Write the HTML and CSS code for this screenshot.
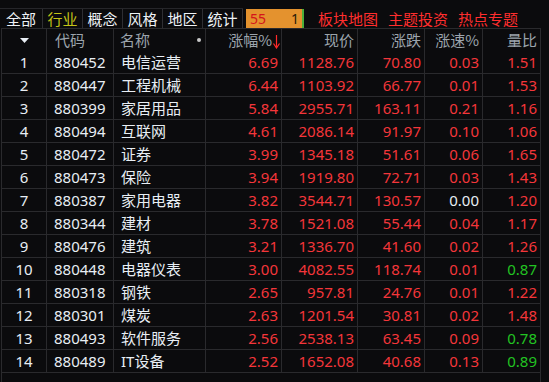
FILE: index.html
```html
<!DOCTYPE html>
<html lang="zh">
<head>
<meta charset="utf-8">
<link rel="stylesheet" href="styles.css">
</head>
<body>
<div class="topbar">
  <div class="tabs">
    <span class="tab first">全部</span>
    <span class="tab active">行业</span>
    <span class="tab">概念</span>
    <span class="tab">风格</span>
    <span class="tab">地区</span>
    <span class="tab">统计</span>
  </div>
  <div class="inputbox"><span class="in-left">55</span><span class="in-right">1</span></div>
  <div class="links">
    <span class="link">板块地图</span>
    <span class="link">主题投资</span>
    <span class="link">热点专题</span>
  </div>
</div>
<div class="table">
  <div class="row head">
    <div class="c center"><svg class="tri" width="9" height="5" viewBox="0 0 9 5"><polygon points="0,0 9,0 4.5,5" fill="#e8eef4"/></svg></div>
    <div class="c left">代码</div>
    <div class="c left name-h">名称<span class="dot"></span></div>
    <div class="c right sort">涨幅%<svg class="arrow" width="7" height="14" viewBox="0 0 7 14"><line x1="3.5" y1="0" x2="3.5" y2="12" stroke="#ff2a2a" stroke-width="1.2"/><polyline points="0.5,8.5 3.5,13 6.5,8.5" fill="none" stroke="#ff2a2a" stroke-width="1.2"/></svg></div>
    <div class="c right">现价</div>
    <div class="c right">涨跌</div>
    <div class="c right">涨速%</div>
    <div class="c right">量比</div>
  </div>
  <div class="row"><div class="c center w">1</div><div class="c left w">880452</div><div class="c left w">电信运营</div><div class="c right r">6.69</div><div class="c right r">1128.76</div><div class="c right r">70.80</div><div class="c right r">0.03</div><div class="c right r">1.51</div></div>
  <div class="row"><div class="c center w">2</div><div class="c left w">880447</div><div class="c left w">工程机械</div><div class="c right r">6.44</div><div class="c right r">1103.92</div><div class="c right r">66.77</div><div class="c right r">0.01</div><div class="c right r">1.53</div></div>
  <div class="row"><div class="c center w">3</div><div class="c left w">880399</div><div class="c left w">家居用品</div><div class="c right r">5.84</div><div class="c right r">2955.71</div><div class="c right r">163.11</div><div class="c right r">0.21</div><div class="c right r">1.16</div></div>
  <div class="row"><div class="c center w">4</div><div class="c left w">880494</div><div class="c left w">互联网</div><div class="c right r">4.61</div><div class="c right r">2086.14</div><div class="c right r">91.97</div><div class="c right r">0.10</div><div class="c right r">1.06</div></div>
  <div class="row"><div class="c center w">5</div><div class="c left w">880472</div><div class="c left w">证券</div><div class="c right r">3.99</div><div class="c right r">1345.18</div><div class="c right r">51.61</div><div class="c right r">0.06</div><div class="c right r">1.65</div></div>
  <div class="row"><div class="c center w">6</div><div class="c left w">880473</div><div class="c left w">保险</div><div class="c right r">3.94</div><div class="c right r">1919.80</div><div class="c right r">72.71</div><div class="c right r">0.03</div><div class="c right r">1.43</div></div>
  <div class="row"><div class="c center w">7</div><div class="c left w">880387</div><div class="c left w">家用电器</div><div class="c right r">3.82</div><div class="c right r">3544.71</div><div class="c right r">130.57</div><div class="c right w">0.00</div><div class="c right r">1.20</div></div>
  <div class="row"><div class="c center w">8</div><div class="c left w">880344</div><div class="c left w">建材</div><div class="c right r">3.78</div><div class="c right r">1521.08</div><div class="c right r">55.44</div><div class="c right r">0.04</div><div class="c right r">1.17</div></div>
  <div class="row"><div class="c center w">9</div><div class="c left w">880476</div><div class="c left w">建筑</div><div class="c right r">3.21</div><div class="c right r">1336.70</div><div class="c right r">41.60</div><div class="c right r">0.02</div><div class="c right r">1.26</div></div>
  <div class="row"><div class="c center w">10</div><div class="c left w">880448</div><div class="c left w">电器仪表</div><div class="c right r">3.00</div><div class="c right r">4082.55</div><div class="c right r">118.74</div><div class="c right r">0.01</div><div class="c right g">0.87</div></div>
  <div class="row"><div class="c center w">11</div><div class="c left w">880318</div><div class="c left w">钢铁</div><div class="c right r">2.65</div><div class="c right r">957.81</div><div class="c right r">24.76</div><div class="c right r">0.01</div><div class="c right r">1.22</div></div>
  <div class="row"><div class="c center w">12</div><div class="c left w">880301</div><div class="c left w">煤炭</div><div class="c right r">2.63</div><div class="c right r">1201.54</div><div class="c right r">30.81</div><div class="c right r">0.02</div><div class="c right r">1.48</div></div>
  <div class="row"><div class="c center w">13</div><div class="c left w">880493</div><div class="c left w">软件服务</div><div class="c right r">2.56</div><div class="c right r">2538.13</div><div class="c right r">63.45</div><div class="c right r">0.09</div><div class="c right g">0.78</div></div>
  <div class="row"><div class="c center w">14</div><div class="c left w">880489</div><div class="c left w">IT设备</div><div class="c right r">2.52</div><div class="c right r">1652.08</div><div class="c right r">40.68</div><div class="c right r">0.13</div><div class="c right g">0.89</div></div>
  <div class="filler"></div>
</div>
</body>
</html>
```
FILE: styles.css
```css
html, body {
  margin: 0;
  padding: 0;
  background: #0b0b0d;
  width: 549px;
  height: 382px;
  overflow: hidden;
  font-family: "Noto Sans", "Noto Sans CJK SC", sans-serif;
  font-size: 15px;
}

.topbar {
  height: 28px;
  padding-top: 8px;
  box-sizing: border-box;
  display: flex;
  align-items: stretch;
}

.tabs {
  display: flex;
  border-top: 1px solid #26262a;
}

.tab {
  width: 39px;
  border-right: 1px solid #2e2e32;
  display: flex;
  align-items: center;
  justify-content: center;
  color: #eef2f6;
  font-family: "Noto Sans CJK SC", sans-serif;
  line-height: 19px;
}

.tab.first { width: 42px; }
.tab.active { color: #c4c418; }

.inputbox {
  margin-left: 3px;
  margin-top: 1px;
  width: 54px;
  background: #e4922e;
  border-right: 2px solid #4caf3a;
  display: flex;
  justify-content: space-between;
  align-items: center;
  padding: 0 3px 0 4px;
  box-sizing: content-box;
  width: 49px;
  font-size: 14px;
  line-height: 18px;
}

.in-left { color: #d4141c; }
.in-right { color: #2a1a08; }

.links {
  display: flex;
  gap: 10px;
  margin-left: 14px;
  align-items: center;
}

.link {
  color: #ff2e2e;
  font-family: "Noto Sans CJK SC", sans-serif;
  line-height: 19px;
}

.table {
  margin-left: 1px;
  width: 538px;
  padding: 1px 1px 0 1px;
  background: #2a2a2d;
  display: flex;
  flex-direction: column;
  gap: 1px;
}

.row {
  display: grid;
  grid-template-columns: 44px 66px 91px 75px 75px 66px 57px 57px;
  gap: 1px;
  height: 22px;
}

.row.head { height: 21px; }

.c {
  background: #0b0b0d;
  display: flex;
  align-items: center;
  line-height: 22px;
  white-space: nowrap;
}

.center { justify-content: center; }
.left { justify-content: flex-start; padding-left: 7px; }
.right { justify-content: flex-end; padding-right: 3px; }

.head .c {
  color: #9ca4ac;
  font-family: "Noto Sans CJK SC", sans-serif;
}

.head .left { padding-left: 8px; }
.head .name-h { padding-left: 6px; position: relative; }

.dot {
  position: absolute;
  right: 4px;
  top: 9px;
  width: 4px;
  height: 4px;
  border-radius: 50%;
  background: #c8c8c8;
}

.tri { margin-top: 0; }

.sort { padding-right: 1px; }
.arrow { margin-left: 1px; margin-top: 3px; }

.w { color: #e8eef4; }
.r { color: #f4363a; }
.g { color: #22c322; }

.filler {
  height: 12px;
  background: #0b0b0d;
  margin-left: 0;
}
```
